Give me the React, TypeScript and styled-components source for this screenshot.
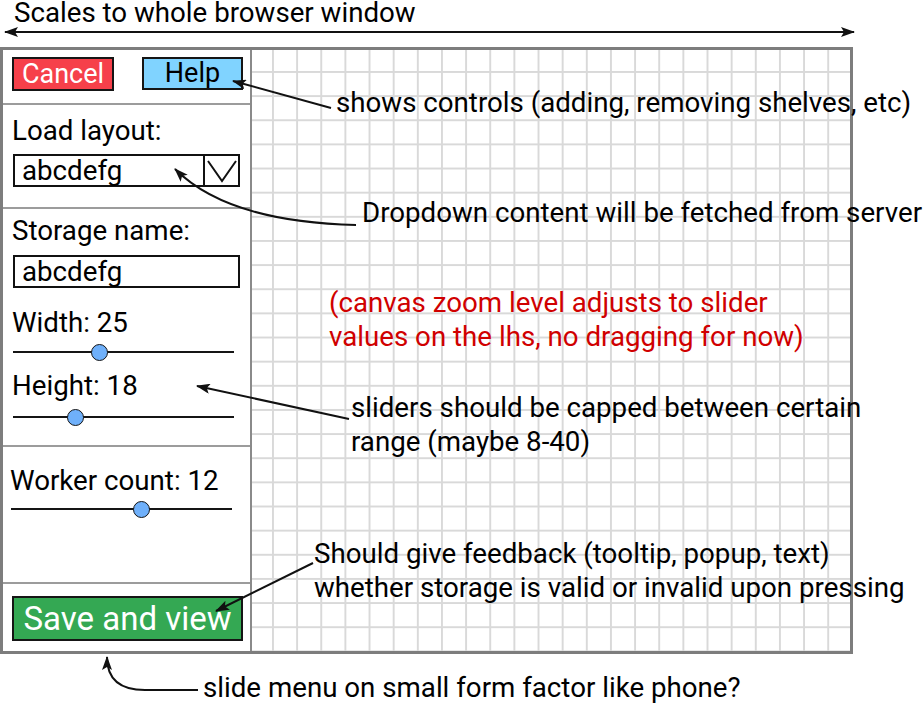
import React from "react";
import styled, { createGlobalStyle } from "styled-components";

const GlobalStyle = createGlobalStyle`
  html, body { margin: 0; padding: 0; background: #ffffff; }
  body { font-family: Roboto, "Liberation Sans", Arial, sans-serif; color: #000; }
  * { box-sizing: border-box; }
`;

const Page = styled.div`
  position: relative;
  width: 923px;
  height: 706px;
  overflow: hidden;
`;

const Header = styled.div`
  height: 47px;
  padding-left: 14px;
  font-size: 27.7px;
  line-height: 25px;
`;

const Frame = styled.div`
  width: 853px;
  height: 607px;
  border: 3px solid #7d7d7d;
  display: flex;
`;

const Sidebar = styled.aside`
  width: 249px;
  flex: none;
  border-right: 2px solid #8a8a8a;
  display: flex;
  flex-direction: column;
`;

const Section = styled.section<{ $h?: number; $pt: number; $pl?: number; $last?: boolean }>`
  flex: ${(p) => (p.$h ? "none" : "1")};
  height: ${(p) => (p.$h ? `${p.$h}px` : "auto")};
  padding-top: ${(p) => p.$pt}px;
  padding-left: ${(p) => p.$pl ?? 9}px;
  border-bottom: ${(p) => (p.$last ? "none" : "2px solid #9c9c9c")};
  display: flex;
  flex-direction: column;
  align-items: flex-start;
`;

const ButtonRow = styled.div`
  display: flex;
  gap: 28px;
  align-items: flex-start;
`;

const Button = styled.button<{ $bg: string; $fg: string; $w: number; $h: number; $size: number }>`
  width: ${(p) => p.$w}px;
  height: ${(p) => p.$h}px;
  background: ${(p) => p.$bg};
  color: ${(p) => p.$fg};
  border: 2px solid #151515;
  border-radius: 0;
  padding: 0;
  margin: 0;
  font-family: Roboto, "Liberation Sans", Arial, sans-serif;
  font-size: ${(p) => p.$size}px;
  line-height: 1;
  display: flex;
  align-items: center;
  justify-content: center;
`;

const Label = styled.div<{ $mt?: number }>`
  font-size: 27.7px;
  line-height: 32px;
  margin-top: ${(p) => p.$mt ?? 0}px;
  white-space: nowrap;
`;

const Field = styled.div<{ $mt?: number }>`
  margin-top: ${(p) => p.$mt ?? 0}px;
  margin-left: 1px;
  width: 227px;
  height: 33px;
  border: 2px solid #111;
  display: flex;
  align-items: center;
  font-size: 27.7px;
`;

const FieldText = styled.span`
  flex: 1;
  padding-left: 7px;
  line-height: 1;
`;

const DropButton = styled.span`
  width: 35px;
  height: 100%;
  border-left: 2px solid #111;
  display: flex;
  align-items: center;
  justify-content: center;
`;

const SliderWrap = styled.div<{ $mt?: number; $w: number }>`
  position: relative;
  margin-top: ${(p) => p.$mt ?? 0}px;
  margin-left: 1px;
  width: ${(p) => p.$w}px;
  height: 20px;
  display: flex;
  align-items: center;
`;

const Track = styled.div`
  width: 100%;
  height: 2px;
  background: #151515;
`;

const Thumb = styled.div`
  position: absolute;
  top: 50%;
  width: 17px;
  height: 17px;
  margin-left: -8.5px;
  margin-top: -8.5px;
  border-radius: 50%;
  background: #6fb0fa;
  border: 1.5px solid #151515;
`;

const Canvas = styled.main`
  flex: 1;
  background-color: #ffffff;
  background-image: linear-gradient(to right, #d9d9d9 0, #d9d9d9 2px, transparent 2px),
    linear-gradient(to bottom, #d9d9d9 0, #d9d9d9 2px, transparent 2px);
  background-size: 24.15px 24.15px;
  background-position: 20px 21px;
`;

const Footer = styled.div`
  padding-left: 203px;
  margin-top: 17px;
  font-size: 27.7px;
  line-height: 34px;
`;

const Note = styled.div<{ $x: number; $y: number; $color?: string }>`
  position: absolute;
  left: ${(p) => p.$x}px;
  top: ${(p) => p.$y}px;
  font-size: 27.7px;
  line-height: 34px;
  white-space: nowrap;
  color: ${(p) => p.$color ?? "#000"};
`;

const Overlay = styled.svg`
  position: absolute;
  left: 0;
  top: 0;
  pointer-events: none;
`;

const SliderControl = ({ value, max, width, mt }: { value: number; max: number; width: number; mt?: number }) => (
  <SliderWrap $w={width} $mt={mt}>
    <Track />
    <Thumb style={{ left: `${(value / max) * width}px` }} />
  </SliderWrap>
);

export default function App() {
  return (
    <Page>
      <GlobalStyle />
      <Header>Scales to whole browser window</Header>
      <Frame>
        <Sidebar>
          <Section $h={55} $pt={7}>
            <ButtonRow>
              <Button $bg="#f6404a" $fg="#ffffff" $w={102} $h={34} $size={27}>Cancel</Button>
              <Button $bg="#80d3ff" $fg="#000000" $w={101} $h={33} $size={27}>Help</Button>
            </ButtonRow>
          </Section>
          <Section $h={104} $pt={10}>
            <Label>Load layout:</Label>
            <Field $mt={7}>
              <FieldText>abcdefg</FieldText>
              <DropButton>
                <svg width="32" height="26" viewBox="0 0 32 26">
                  <polyline points="2,3 16,23 30,3" fill="none" stroke="#111" strokeWidth="2" />
                </svg>
              </DropButton>
            </Field>
          </Section>
          <Section $h={238} $pt={6}>
            <Label>Storage name:</Label>
            <Field $mt={8}>
              <FieldText>abcdefg</FieldText>
            </Field>
            <Label $mt={19}>Width: 25</Label>
            <SliderControl value={25} max={64} width={221} mt={3} />
            <Label $mt={8}>Height: 18</Label>
            <SliderControl value={18} max={64} width={221} mt={5} />
          </Section>
          <Section $pt={18} $pl={7}>
            <Label>Worker count: 12</Label>
            <SliderControl value={12} max={20.4} width={221} mt={2} />
          </Section>
          <Section $h={67} $pt={12} $last>
            <Button $bg="#34a853" $fg="#ffffff" $w={231} $h={45} $size={33}>Save and view</Button>
          </Section>
        </Sidebar>
        <Canvas />
      </Frame>
      <Footer>slide menu on small form factor like phone?</Footer>

      <Note $x={336} $y={86}>shows controls (adding, removing shelves, etc)</Note>
      <Note $x={362} $y={196}>Dropdown content will be fetched from server</Note>
      <Note $x={329} $y={286} $color="#d00000">
        (canvas zoom level adjusts to slider
        <br />
        values on the lhs, no dragging for now)
      </Note>
      <Note $x={351} $y={391}>
        sliders should be capped between certain
        <br />
        range (maybe 8-40)
      </Note>
      <Note $x={314} $y={537}>
        Should give feedback (tooltip, popup, text)
        <br />
        whether storage is valid or invalid upon pressing
      </Note>

      <Overlay width="923" height="706" viewBox="0 0 923 706">
        <defs>
          <marker id="ah" viewBox="0 0 14 10" refX="13" refY="5" markerWidth="14" markerHeight="10" markerUnits="userSpaceOnUse" orient="auto-start-reverse">
            <path d="M0,0 L14,5 L0,10 L3,5 z" fill="#111" />
          </marker>
        </defs>
        <g fill="none" stroke="#111" strokeWidth="2">
          <line x1="5" y1="32" x2="854" y2="32" markerStart="url(#ah)" markerEnd="url(#ah)" />
          <line x1="331" y1="108" x2="233" y2="81" markerEnd="url(#ah)" />
          <path d="M356,225 Q228,222 175,169" markerEnd="url(#ah)" />
          <line x1="349" y1="419" x2="197" y2="386" markerEnd="url(#ah)" />
          <line x1="313" y1="563" x2="216" y2="611" markerEnd="url(#ah)" />
          <path d="M198,690 L145,690 C116,690 107,676 107,657" markerEnd="url(#ah)" />
        </g>
      </Overlay>
    </Page>
  );
}
